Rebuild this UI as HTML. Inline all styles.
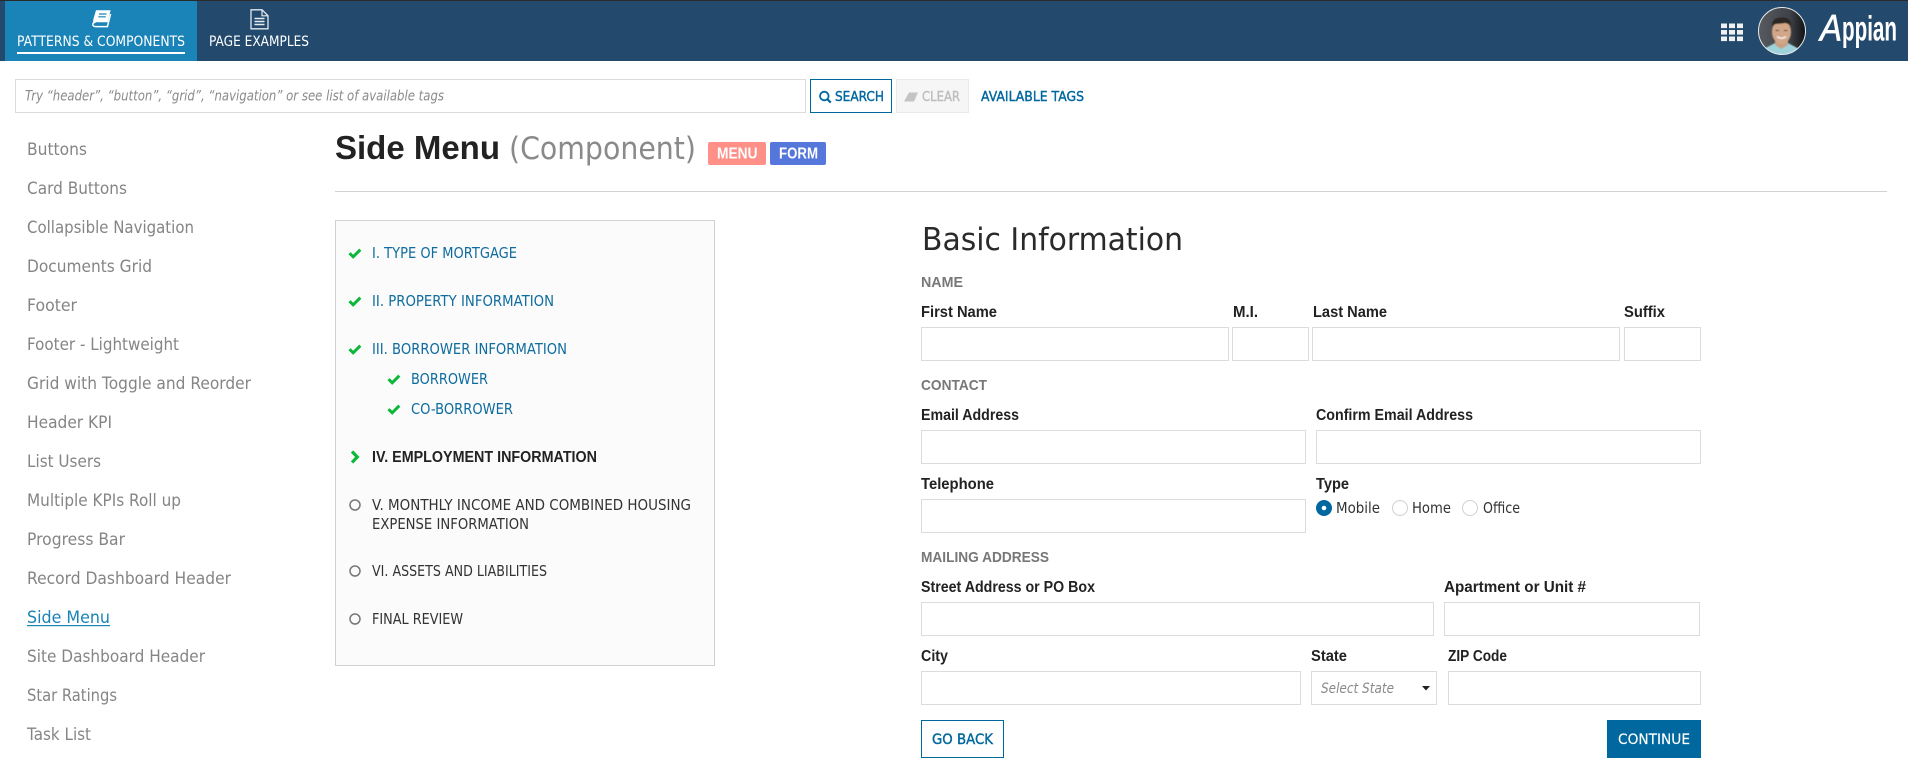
<!DOCTYPE html>
<html lang="en">
<head>
<meta charset="utf-8">
<title>Side Menu (Component)</title>
<style>
html,body{margin:0;padding:0;background:#fff;width:1908px;height:772px;overflow:hidden}
.a{position:absolute;box-sizing:border-box}
header{left:0;top:0;width:1908px;height:61px;background:#234a6d;border-top:1px solid #2a2a2a}
.tab{left:5px;top:1px;width:192px;height:60px;background:#1a83b8}
.ul{left:17px;top:52px;width:168px;height:2px;background:#fff}
input{display:block;margin:0;padding:0;background:#fff;border:1px solid #dcdcdc;border-radius:0;outline:0}
.btn{border:1px solid #00689f;background:#fff}
svg{position:absolute;left:0;top:0}
text{font-family:"DejaVu Sans","Liberation Sans",sans-serif;font-size:15px;fill:#333}
.b{font-family:"Liberation Sans",sans-serif;font-weight:700;font-size:15.5px;fill:#222}
.s{font-family:"Liberation Sans",sans-serif;font-weight:700;font-size:15px;fill:#777}
.nav{font-size:14px;fill:#fff}
.side{font-size:17px;fill:#858585}
.lnk{fill:#0f6c9f}
.sb{font-size:13.5px;fill:#00689f;stroke:#00689f;stroke-width:.4px}
.i{font-style:italic;font-size:14px;fill:#8a8a8a}
</style>
</head>
<body>
<header class="a"></header>
<div class="a tab"></div>
<div class="a ul"></div>

<input class="a" style="left:15px;top:79px;width:791px;height:34px" aria-label="Search">
<div class="a btn" style="left:810px;top:79px;width:82px;height:34px"></div>
<div class="a" style="left:896px;top:79px;width:73px;height:34px;background:#f6f6f6;border:1px solid #ebebeb"></div>

<div class="a" style="left:708px;top:142px;width:58px;height:23px;background:#ff9087;border-radius:2px"></div>
<div class="a" style="left:770px;top:142px;width:56px;height:23px;background:#5577dc;border-radius:2px"></div>
<div class="a" style="left:335px;top:191px;width:1552px;height:1px;background:#d2d2d2"></div>

<div class="a" style="left:335px;top:220px;width:380px;height:446px;background:#fbfbfb;border:1px solid #d0d0d0"></div>

<input class="a" style="left:921px;top:327px;width:308px;height:34px" aria-label="First Name">
<input class="a" style="left:1232px;top:327px;width:77px;height:34px" aria-label="M.I.">
<input class="a" style="left:1312px;top:327px;width:308px;height:34px" aria-label="Last Name">
<input class="a" style="left:1624px;top:327px;width:77px;height:34px" aria-label="Suffix">
<input class="a" style="left:921px;top:430px;width:385px;height:34px" aria-label="Email Address">
<input class="a" style="left:1316px;top:430px;width:385px;height:34px" aria-label="Confirm Email Address">
<input class="a" style="left:921px;top:499px;width:385px;height:34px" aria-label="Telephone">
<input class="a" style="left:921px;top:602px;width:513px;height:34px" aria-label="Street Address or PO Box">
<input class="a" style="left:1444px;top:602px;width:256px;height:34px" aria-label="Apartment or Unit">
<input class="a" style="left:921px;top:671px;width:380px;height:34px" aria-label="City">
<div class="a" style="left:1311px;top:671px;width:126px;height:34px;background:#fff;border:1px solid #dcdcdc"></div>
<input class="a" style="left:1448px;top:671px;width:253px;height:34px" aria-label="ZIP Code">
<div class="a btn" style="left:921px;top:720px;width:83px;height:38px"></div>
<div class="a" style="left:1607px;top:720px;width:94px;height:38px;background:#00689f"></div>

<svg width="1908" height="772" viewBox="0 0 1908 772" xmlns="http://www.w3.org/2000/svg">
<defs>
<clipPath id="av"><circle cx="1782" cy="31" r="23.5"/></clipPath>
<linearGradient id="avbg" x1="0" x2="1" y1="0" y2="0"><stop offset="0" stop-color="#585c61"/><stop offset=".65" stop-color="#3f4348"/><stop offset="1" stop-color="#0c0d0f"/></linearGradient>
<filter id="bl" x="-10%" y="-10%" width="120%" height="120%"><feGaussianBlur stdDeviation=".6"/></filter>
</defs>

<!-- header icons -->
<path d="M96 10.3H110.6L107.7 22.2H95.6C94.2 22.2 93.4 23 92.8 24.3L93.4 19Z" fill="#fff"/>
<path d="M95.6 22.2C91.8 22.2 91.8 26.6 95.6 26.6H107.4L110.6 14" fill="none" stroke="#fff" stroke-width="1.5"/>
<path d="M99 14h7.5M98.3 16.8h7.5" stroke="#1a83b8" stroke-width="1.2" fill="none"/>
<path d="M251 9.8H262L268 15.8V28.8H251Z" fill="none" stroke="#e4e9ee" stroke-width="1.3"/>
<path d="M262 9.8V15.8H268" fill="none" stroke="#e4e9ee" stroke-width="1.2"/>
<path d="M254.5 18.5h10M254.5 21.5h10M254.5 24.5h10" stroke="#e4e9ee" stroke-width="1.5"/>
<text class="nav" x="17" y="46" textLength="168" lengthAdjust="spacingAndGlyphs">PATTERNS &amp; COMPONENTS</text>
<text class="nav" x="209" y="46" textLength="100" lengthAdjust="spacingAndGlyphs">PAGE EXAMPLES</text>

<g fill="#f0f0f0">
<rect x="1721" y="23.5" width="6" height="4.6"/><rect x="1729" y="23.5" width="6" height="4.6"/><rect x="1737" y="23.5" width="6" height="4.6"/>
<rect x="1721" y="30" width="6" height="4.6"/><rect x="1729" y="30" width="6" height="4.6"/><rect x="1737" y="30" width="6" height="4.6"/>
<rect x="1721" y="36.5" width="6" height="4.6"/><rect x="1729" y="36.5" width="6" height="4.6"/><rect x="1737" y="36.5" width="6" height="4.6"/>
</g>
<g clip-path="url(#av)">
<rect x="1757" y="6" width="50" height="50" fill="url(#avbg)"/>
<g filter="url(#bl)">
<path d="M1759 56C1761 49 1768 47 1775 43L1781 48L1788 43C1795 47 1802 49 1804 56Z" fill="#9fd3dc"/>
<path d="M1775 39H1788V45L1781 49L1775 45Z" fill="#c9a084"/>
<ellipse cx="1781.500" cy="32" rx="9.500" ry="12" fill="#d2a688"/>
<path d="M1772.500 27C1771 21 1775 17.500 1782 17.500C1789 17.500 1792 21 1790.500 27C1789.500 24.500 1788 23.500 1785 23C1781 24 1776 23.500 1774.500 24.500C1773.500 25.500 1773 26 1772.500 27Z" fill="#2a2523"/>
<path d="M1775.500 30.500h3.500M1784 30.500h3.500" stroke="#3a2a24" stroke-width="1.100"/>
<path d="M1777 36.500C1779.500 38.800 1783.500 38.800 1786 36.500" stroke="#f8f0ee" stroke-width="1.500" fill="none"/>
</g>
</g>
<circle cx="1782" cy="31" r="23.5" fill="none" stroke="#e8e8e8" stroke-width="1"/>
<text x="1820" y="40.500" textLength="22" lengthAdjust="spacingAndGlyphs" style="font-family:'Liberation Sans',sans-serif;font-size:37px;font-style:italic;fill:#fff;stroke:#fff;stroke-width:.7px">A</text>
<text x="1842" y="40.500" textLength="55" lengthAdjust="spacingAndGlyphs" style="font-family:'Liberation Sans',sans-serif;font-size:35px;font-weight:700;fill:#fff">ppian</text>

<!-- search row -->
<text class="i" x="25" y="100.500" textLength="419" lengthAdjust="spacingAndGlyphs">Try “header”, “button”, “grid”, “navigation” or see list of available tags</text>
<circle cx="824.300" cy="96" r="4.300" fill="none" stroke="#00689f" stroke-width="1.800"/>
<path d="M827.500 99.300L830.800 102.600" stroke="#00689f" stroke-width="2.200"/>
<text class="sb" x="835" y="101" textLength="49" lengthAdjust="spacingAndGlyphs">SEARCH</text>
<path d="M909 92.500H918L914 101.500H904Z" fill="#c4c4c4"/>
<text class="sb" x="922" y="101" textLength="38" lengthAdjust="spacingAndGlyphs" style="fill:#bdbdbd;stroke:#bdbdbd">CLEAR</text>
<text class="sb" x="981" y="101" textLength="103" lengthAdjust="spacingAndGlyphs">AVAILABLE TAGS</text>

<!-- sidebar -->
<text class="side" x="27" y="155" textLength="60" lengthAdjust="spacingAndGlyphs">Buttons</text>
<text class="side" x="27" y="194" textLength="100" lengthAdjust="spacingAndGlyphs">Card Buttons</text>
<text class="side" x="27" y="233" textLength="167" lengthAdjust="spacingAndGlyphs">Collapsible Navigation</text>
<text class="side" x="27" y="272" textLength="125" lengthAdjust="spacingAndGlyphs">Documents Grid</text>
<text class="side" x="27" y="311" textLength="50" lengthAdjust="spacingAndGlyphs">Footer</text>
<text class="side" x="27" y="350" textLength="152" lengthAdjust="spacingAndGlyphs">Footer - Lightweight</text>
<text class="side" x="27" y="389" textLength="224" lengthAdjust="spacingAndGlyphs">Grid with Toggle and Reorder</text>
<text class="side" x="27" y="428" textLength="85" lengthAdjust="spacingAndGlyphs">Header KPI</text>
<text class="side" x="27" y="467" textLength="74" lengthAdjust="spacingAndGlyphs">List Users</text>
<text class="side" x="27" y="506" textLength="154" lengthAdjust="spacingAndGlyphs">Multiple KPIs Roll up</text>
<text class="side" x="27" y="545" textLength="98" lengthAdjust="spacingAndGlyphs">Progress Bar</text>
<text class="side" x="27" y="584" textLength="204" lengthAdjust="spacingAndGlyphs">Record Dashboard Header</text>
<text class="side" x="27" y="623" textLength="83" lengthAdjust="spacingAndGlyphs" style="fill:#1a83b8">Side Menu</text>
<rect x="27" y="625" width="83" height="1.200" fill="#1a83b8"/>
<text class="side" x="27" y="662" textLength="178" lengthAdjust="spacingAndGlyphs">Site Dashboard Header</text>
<text class="side" x="27" y="701" textLength="90" lengthAdjust="spacingAndGlyphs">Star Ratings</text>
<text class="side" x="27" y="740" textLength="64" lengthAdjust="spacingAndGlyphs">Task List</text>

<!-- title -->
<text x="335" y="159" textLength="165" lengthAdjust="spacingAndGlyphs" style="font-family:'Liberation Sans',sans-serif;font-weight:700;font-size:33px;fill:#222">Side Menu</text>
<text x="509" y="159" textLength="187" lengthAdjust="spacingAndGlyphs" style="font-size:31px;fill:#8a8a8a">(Component)</text>
<text class="b" x="717" y="158.500" textLength="40.500" lengthAdjust="spacingAndGlyphs" style="fill:#fff">MENU</text>
<text class="b" x="779" y="158.500" textLength="39" lengthAdjust="spacingAndGlyphs" style="fill:#fff">FORM</text>

<!-- side menu -->
<g fill="none" stroke="#0cb83a" stroke-width="3">
<path d="M349.500 253.200L353.200 256.800L360.300 249.700"/>
<path d="M349.500 301.200L353.200 304.800L360.300 297.700"/>
<path d="M349.500 349.200L353.200 352.800L360.300 345.700"/>
<path d="M388.500 379.200L392.200 382.800L399.300 375.700"/>
<path d="M388.500 409.200L392.200 412.800L399.300 405.700"/>
<path d="M352 451.500L357.300 457L352 462.500" stroke-width="3.200"/>
</g>
<g fill="none" stroke="#777" stroke-width="1.500">
<circle cx="355" cy="505" r="5"/>
<circle cx="355" cy="571" r="5"/>
<circle cx="355" cy="619" r="5"/>
</g>
<text class="lnk" x="372" y="258" textLength="145" lengthAdjust="spacingAndGlyphs">I. TYPE OF MORTGAGE</text>
<text class="lnk" x="372" y="306" textLength="182" lengthAdjust="spacingAndGlyphs">II. PROPERTY INFORMATION</text>
<text class="lnk" x="372" y="354" textLength="195" lengthAdjust="spacingAndGlyphs">III. BORROWER INFORMATION</text>
<text class="lnk" x="411" y="384" textLength="77" lengthAdjust="spacingAndGlyphs">BORROWER</text>
<text class="lnk" x="411" y="414" textLength="102" lengthAdjust="spacingAndGlyphs">CO-BORROWER</text>
<text class="b" x="372" y="462" textLength="225" lengthAdjust="spacingAndGlyphs">IV. EMPLOYMENT INFORMATION</text>
<text x="372" y="510" textLength="319" lengthAdjust="spacingAndGlyphs">V. MONTHLY INCOME AND COMBINED HOUSING</text>
<text x="372" y="529" textLength="157" lengthAdjust="spacingAndGlyphs">EXPENSE INFORMATION</text>
<text x="372" y="576" textLength="175" lengthAdjust="spacingAndGlyphs">VI. ASSETS AND LIABILITIES</text>
<text x="372" y="624" textLength="91" lengthAdjust="spacingAndGlyphs">FINAL REVIEW</text>

<!-- form -->
<text x="922" y="250" textLength="261" lengthAdjust="spacingAndGlyphs" style="font-size:31px;fill:#2a2a2a">Basic Information</text>
<text class="s" x="921" y="287" textLength="42" lengthAdjust="spacingAndGlyphs">NAME</text>
<text class="b" x="921" y="317" textLength="76" lengthAdjust="spacingAndGlyphs">First Name</text>
<text class="b" x="1233" y="317" textLength="25" lengthAdjust="spacingAndGlyphs">M.I.</text>
<text class="b" x="1313" y="317" textLength="74" lengthAdjust="spacingAndGlyphs">Last Name</text>
<text class="b" x="1624" y="317" textLength="41" lengthAdjust="spacingAndGlyphs">Suffix</text>
<text class="s" x="921" y="390" textLength="66" lengthAdjust="spacingAndGlyphs">CONTACT</text>
<text class="b" x="921" y="420" textLength="98" lengthAdjust="spacingAndGlyphs">Email Address</text>
<text class="b" x="1316" y="420" textLength="157" lengthAdjust="spacingAndGlyphs">Confirm Email Address</text>
<text class="b" x="921" y="489" textLength="73" lengthAdjust="spacingAndGlyphs">Telephone</text>
<text class="b" x="1316" y="489" textLength="33" lengthAdjust="spacingAndGlyphs">Type</text>
<circle cx="1324" cy="508" r="8" fill="#00689f"/><circle cx="1324" cy="508" r="2.300" fill="#fff"/>
<text x="1336" y="513" textLength="44" lengthAdjust="spacingAndGlyphs">Mobile</text>
<circle cx="1400" cy="508" r="7.500" fill="#fff" stroke="#d0d0d0"/>
<text x="1412" y="513" textLength="39" lengthAdjust="spacingAndGlyphs">Home</text>
<circle cx="1470" cy="508" r="7.500" fill="#fff" stroke="#d0d0d0"/>
<text x="1483" y="513" textLength="37" lengthAdjust="spacingAndGlyphs">Office</text>
<text class="s" x="921" y="562" textLength="128" lengthAdjust="spacingAndGlyphs">MAILING ADDRESS</text>
<text class="b" x="921" y="592" textLength="174" lengthAdjust="spacingAndGlyphs">Street Address or PO Box</text>
<text class="b" x="1444" y="592" textLength="142" lengthAdjust="spacingAndGlyphs">Apartment or Unit #</text>
<text class="b" x="921" y="661" textLength="27" lengthAdjust="spacingAndGlyphs">City</text>
<text class="b" x="1311" y="661" textLength="36" lengthAdjust="spacingAndGlyphs">State</text>
<text class="b" x="1448" y="661" textLength="59" lengthAdjust="spacingAndGlyphs">ZIP Code</text>
<text class="i" x="1321" y="693" textLength="73" lengthAdjust="spacingAndGlyphs">Select State</text>
<path d="M1422 686H1430L1426 690.500Z" fill="#222"/>
<text class="sb" x="932" y="744" textLength="61" lengthAdjust="spacingAndGlyphs" style="font-size:14.5px">GO BACK</text>
<text class="sb" x="1618" y="744" textLength="72" lengthAdjust="spacingAndGlyphs" style="font-size:14.5px;fill:#fff;stroke:#fff;stroke-width:.15px">CONTINUE</text>
</svg>
</body>
</html>
